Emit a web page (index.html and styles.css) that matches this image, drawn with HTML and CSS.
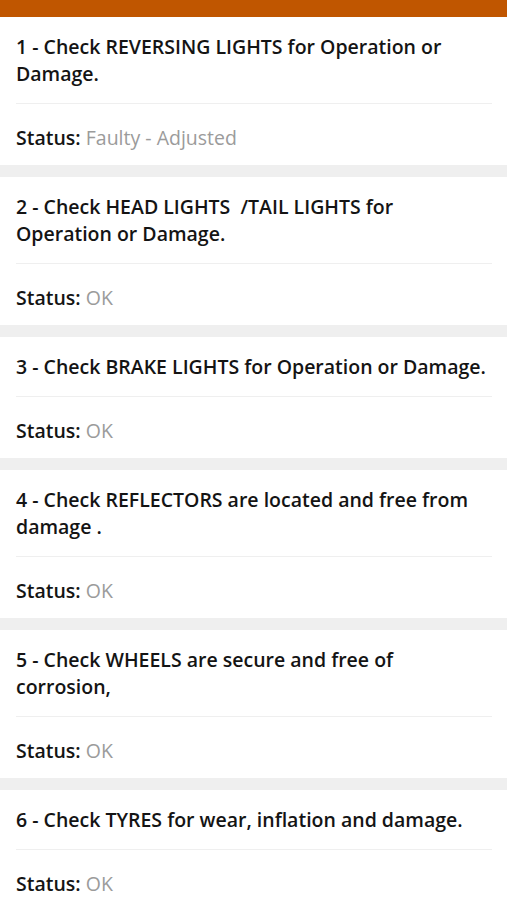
FILE: index.html
```html
<!DOCTYPE html>
<html>
<head>
<meta charset="utf-8">
<link rel="stylesheet" href="styles.css">
</head>
<body>
<div class="topbar"></div>
<div class="list">
  <div class="card">
    <div class="title">1 - Check REVERSING LIGHTS for Operation or Damage.</div>
    <div class="status"><span class="label">Status:</span> <span class="value">Faulty - Adjusted</span></div>
  </div>
  <div class="card">
    <div class="title">2 - Check HEAD LIGHTS &nbsp;/TAIL LIGHTS for Operation or Damage.</div>
    <div class="status"><span class="label">Status:</span> <span class="value">OK</span></div>
  </div>
  <div class="card">
    <div class="title">3 - Check BRAKE LIGHTS for Operation or Damage.</div>
    <div class="status"><span class="label">Status:</span> <span class="value">OK</span></div>
  </div>
  <div class="card">
    <div class="title">4 - Check REFLECTORS are located and free from damage .</div>
    <div class="status"><span class="label">Status:</span> <span class="value">OK</span></div>
  </div>
  <div class="card">
    <div class="title">5 - Check WHEELS are secure and free of corrosion,</div>
    <div class="status"><span class="label">Status:</span> <span class="value">OK</span></div>
  </div>
  <div class="card">
    <div class="title">6 - Check TYRES for wear, inflation and damage.</div>
    <div class="status"><span class="label">Status:</span> <span class="value">OK</span></div>
  </div>
</div>
</body>
</html>
```

FILE: styles.css
```css
html, body {
  margin: 0;
  padding: 0;
}
body {
  background: #efefef;
  font-family: "Open Sans", "Noto Sans", sans-serif;
  color: #141414;
  overflow: hidden;
}
.topbar {
  height: 17px;
  background: #c05600;
}
.list {
  display: flex;
  flex-direction: column;
  gap: 12px;
}
.card {
  background: #fff;
  padding: 0 15px 0 16px;
}
.title {
  font-size: 19.5px;
  font-weight: 600;
  line-height: 27px;
  padding: 16px 0;
  border-bottom: 1px solid #efefef;
}
.status {
  font-size: 19.5px;
  line-height: 27px;
  padding: 20px 0 14px;
}
.label {
  font-weight: 600;
}
.value {
  color: #9b9b9b;
  font-weight: 400;
}
```
